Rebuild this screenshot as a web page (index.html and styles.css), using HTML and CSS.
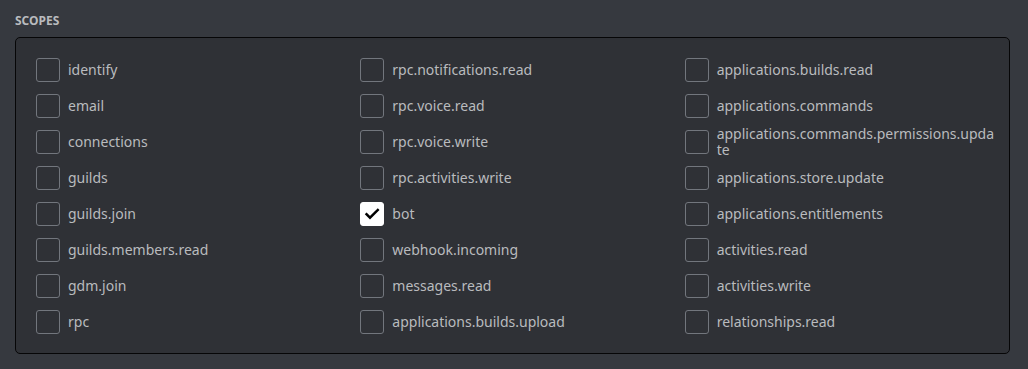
FILE: index.html
```html
<!DOCTYPE html>
<html>
<head>
<meta charset="utf-8">
<link rel="stylesheet" href="styles.css">
</head>
<body>
<div class="section">
  <h2 class="title">Scopes</h2>
  <div class="box">
    <div class="grid">
      <label class="item"><span class="cb"></span><span class="txt">identify</span></label>
      <label class="item"><span class="cb"></span><span class="txt">rpc.notifications.read</span></label>
      <label class="item"><span class="cb"></span><span class="txt">applications.builds.read</span></label>

      <label class="item"><span class="cb"></span><span class="txt">email</span></label>
      <label class="item"><span class="cb"></span><span class="txt">rpc.voice.read</span></label>
      <label class="item"><span class="cb"></span><span class="txt">applications.commands</span></label>

      <label class="item"><span class="cb"></span><span class="txt">connections</span></label>
      <label class="item"><span class="cb"></span><span class="txt">rpc.voice.write</span></label>
      <label class="item"><span class="cb"></span><span class="txt">applications.commands.permissions.update</span></label>

      <label class="item"><span class="cb"></span><span class="txt">guilds</span></label>
      <label class="item"><span class="cb"></span><span class="txt">rpc.activities.write</span></label>
      <label class="item"><span class="cb"></span><span class="txt">applications.store.update</span></label>

      <label class="item"><span class="cb"></span><span class="txt">guilds.join</span></label>
      <label class="item"><span class="cb checked"><svg width="24" height="24" viewBox="0 0 24 24"><path d="M6.5 12.2 L10 15.7 L17.8 7.9" fill="none" stroke="#000" stroke-width="2.4" stroke-linecap="square"/></svg></span><span class="txt">bot</span></label>
      <label class="item"><span class="cb"></span><span class="txt">applications.entitlements</span></label>

      <label class="item"><span class="cb"></span><span class="txt">guilds.members.read</span></label>
      <label class="item"><span class="cb"></span><span class="txt">webhook.incoming</span></label>
      <label class="item"><span class="cb"></span><span class="txt">activities.read</span></label>

      <label class="item"><span class="cb"></span><span class="txt">gdm.join</span></label>
      <label class="item"><span class="cb"></span><span class="txt">messages.read</span></label>
      <label class="item"><span class="cb"></span><span class="txt">activities.write</span></label>

      <label class="item"><span class="cb"></span><span class="txt">rpc</span></label>
      <label class="item"><span class="cb"></span><span class="txt">applications.builds.upload</span></label>
      <label class="item"><span class="cb"></span><span class="txt">relationships.read</span></label>
    </div>
  </div>
</div>
</body>
</html>
```
FILE: styles.css
```css
html, body {
  margin: 0;
  padding: 0;
  background: #36393f;
}
body {
  font-family: "Noto Sans", "Open Sans", sans-serif;
  color: #b9bbbe;
}
.section {
  padding: 13px 18px 0 15px;
}
.title {
  margin: 0 0 8px 0;
  font-size: 12px;
  line-height: 16px;
  font-weight: 700;
  text-transform: uppercase;
  color: #b9bbbe;
}
.box {
  background: #2f3136;
  border: 1px solid #060607;
  border-radius: 5px;
  padding: 20px 0 19px 20px;
}
.grid {
  display: grid;
  grid-template-columns: repeat(3, 1fr);
  row-gap: 12px;
}
.item {
  display: flex;
  align-items: center;
  gap: 8px;
  height: 24px;
  padding-right: 12px;
  min-width: 0;
}
.cb {
  flex: 0 0 auto;
  box-sizing: border-box;
  width: 24px;
  height: 24px;
  border: 1px solid #72767d;
  border-radius: 3px;
  display: flex;
}
.cb.checked {
  background: #fff;
  border-color: #fff;
}
.cb.checked svg {
  margin: -1px;
}
.txt {
  font-size: 14px;
  line-height: 16px;
  overflow-wrap: anywhere;
  min-width: 0;
}
```
